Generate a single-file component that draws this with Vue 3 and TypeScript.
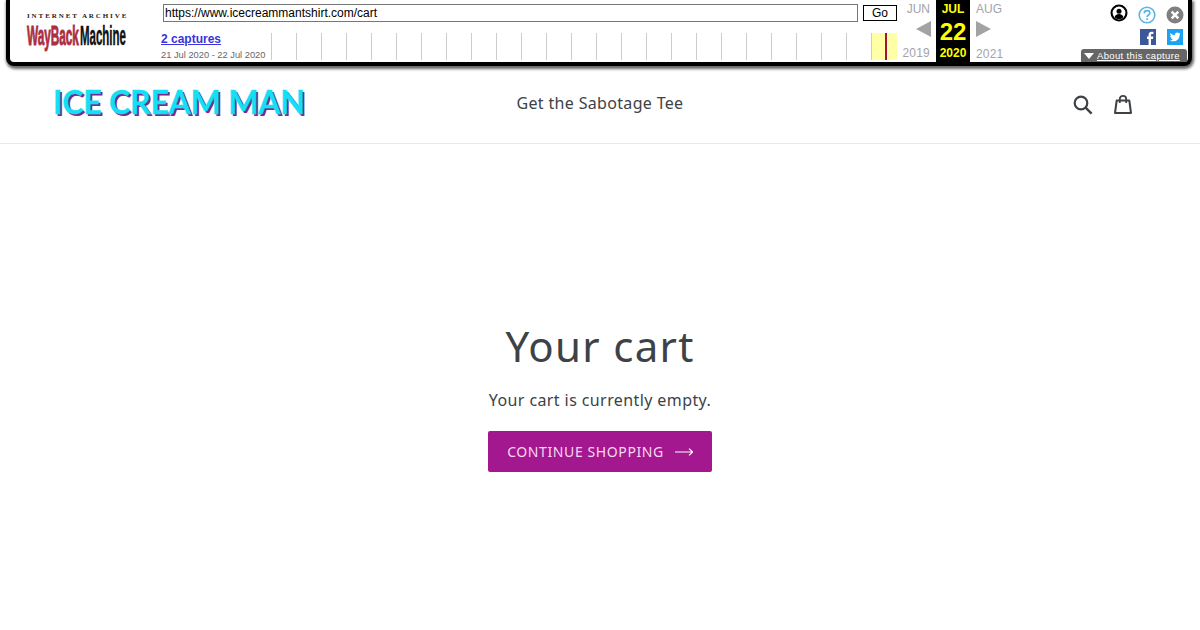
<script setup lang="ts">
const ticks: number[] = Array.from({ length: 24 }, (_, i) => i)
</script>

<template>
  <div class="page">
    <div class="wb">
      <div class="wb-logo">
        <div class="ia">INTERNET ARCHIVE</div>
        <div class="wm"><span class="way">WayBack</span><span class="mach">Machine</span></div>
      </div>
      <div class="wb-mid">
        <div class="url-row">
          <div class="url">https://www.icecreammantshirt.com/cart</div>
          <div class="go">Go</div>
        </div>
        <div class="cap-row">
          <div class="cap">
            <a class="cap-link">2 captures</a>
            <div class="cap-date">21 Jul 2020 - 22 Jul 2020</div>
          </div>
          <div class="spark">
            <div v-for="t in ticks" :key="t" class="tick"></div>
            <div class="tick now"><i></i></div>
          </div>
        </div>
      </div>
      <div class="cal side">
        <div class="mon r">JUN</div>
        <div class="arrow left"></div>
        <div class="yr r">2019</div>
      </div>
      <div class="cal cur">
        <div class="mon">JUL</div>
        <div class="day">22</div>
        <div class="yr">2020</div>
      </div>
      <div class="cal side next">
        <div class="mon l">AUG</div>
        <div class="arrow right"></div>
        <div class="yr l">2021</div>
      </div>
      <div class="wb-tools">
        <div class="tool-row">
          <svg width="18" height="18" viewBox="0 0 18 18">
            <circle cx="9" cy="9" r="8.5" fill="#000" />
            <circle cx="9" cy="9" r="6.4" fill="#fff" />
            <circle cx="9" cy="7.2" r="2.5" fill="#000" />
            <path d="M4.5 13.2c.8-2.4 2.5-3.3 4.5-3.3s3.700.9 4.500 3.300c-1.200 1.200-2.800 1.900-4.500 1.900s-3.300-.7-4.500-1.900z" fill="#000" />
          </svg>
          <svg class="help" width="18" height="18" viewBox="0 0 18 18">
            <circle cx="9" cy="9" r="7.800" fill="none" stroke="#5bb3e6" stroke-width="1.600" />
            <path d="M6.300 7.200c0-1.600 1.200-2.600 2.800-2.600s2.700 1 2.700 2.300c0 2.100-2.700 2-2.700 4" fill="none" stroke="#5bb3e6" stroke-width="1.700" />
            <rect x="8.200" y="12.300" width="1.800" height="1.800" fill="#5bb3e6" />
          </svg>
          <svg class="help" width="18" height="18" viewBox="0 0 18 18">
            <circle cx="9" cy="9" r="8.500" fill="#808080" />
            <path d="M5.700 5.700l6.600 6.600M12.300 5.700l-6.600 6.600" stroke="#fff" stroke-width="2.400" />
          </svg>
        </div>
        <div class="share-row">
          <svg width="16" height="16" viewBox="0 0 16 16">
            <rect width="16" height="16" fill="#3b5998" />
            <path d="M11 16V10h2l.3-2.400H11V6.200c0-.7.2-1.200 1.200-1.200h1.200V2.900c-.3 0-1-.1-1.800-.1-1.800 0-3 1.100-3 3.100v1.700H7V10h1.600v6z" fill="#fff" />
          </svg>
          <svg width="16" height="16" viewBox="0 0 16 16">
            <rect width="16" height="16" fill="#1da1f2" />
            <path d="M13.500 4.600c-.4.200-.8.300-1.300.4.500-.3.800-.7 1-1.200-.4.300-.9.400-1.400.5a2.200 2.200 0 0 0-3.800 2C6.200 6.200 4.600 5.300 3.500 4c-.6 1-.3 2.300.7 3-.4 0-.7-.1-1-.3 0 1.100.8 2 1.800 2.200-.3.100-.7.100-1 0 .3.900 1.100 1.500 2.100 1.500-1 .8-2.200 1.100-3.300 1 3.300 2.100 9.800.9 9.800-5.700.4-.3.700-.7.900-1.100z" fill="#fff" />
          </svg>
        </div>
        <div class="about"><span class="tri"></span><span class="about-t">About this capture</span></div>
      </div>
    </div>

    <header class="hdr">
      <div class="brand">ICE CREAM MAN</div>
      <nav class="nav">Get the Sabotage Tee</nav>
      <div class="hdr-icons">
        <svg width="20" height="20" viewBox="0 0 20 20">
          <circle cx="8" cy="8" r="6.300" fill="none" stroke="#3d4246" stroke-width="2.200" />
          <path d="M12.600 12.600l6 6" stroke="#3d4246" stroke-width="2.400" />
        </svg>
        <svg width="20" height="22" viewBox="0 0 20 22">
          <path d="M3.700 6.500h12.600l1.700 12.500H2z" fill="none" stroke="#3d4246" stroke-width="2" stroke-linejoin="round" />
          <path d="M6.800 9V5a3.200 3.200 0 0 1 6.400 0v4" fill="none" stroke="#3d4246" stroke-width="1.800" />
        </svg>
      </div>
    </header>

    <main class="main">
      <h1 class="title">Your cart</h1>
      <p class="empty">Your cart is currently empty.</p>
      <a class="btn">
        <span>CONTINUE SHOPPING</span>
        <svg width="18" height="8" viewBox="0 0 18 8">
          <path d="M0 4h17.500M14 .7L17.700 4 14 7.300" fill="none" stroke="#fff" stroke-width="1.100" />
        </svg>
      </a>
    </main>
  </div>
</template>

<style>
html, body { margin: 0; background: #fff; }
</style>

<style scoped>
.page {
  width: 1200px;
  height: 630px;
  overflow: hidden;
  background: #fff;
  font-family: "Noto Sans", sans-serif;
  color: #3d4246;
}
.wb {
  box-sizing: border-box;
  width: 1186px;
  height: 66px;
  margin-left: 6px;
  display: flex;
  background: #fff;
  border: 4px solid #000;
  border-top: 0;
  border-radius: 0 0 8px 8px;
  box-shadow: 1px 2px 3px 1px #666;
  font-family: "Liberation Sans", Arial, sans-serif;
}
.wb-logo {
  width: 151px;
  flex: none;
  box-sizing: border-box;
  padding: 12px 0 0 17px;
}
.ia {
  width: 100px;
  height: 8px;
  font: 700 7px/8px "Liberation Serif", serif;
  letter-spacing: 1.900px;
  color: #222;
  white-space: nowrap;
}
.wm {
  display: flex;
  width: 99px;
  height: 32px;
  font: 700 28px/32px "Liberation Sans", sans-serif;
  white-space: nowrap;
}
.way {
  display: block;
  width: 53px;
  flex: none;
  color: #ab2e43;
  -webkit-text-stroke: 1px #ab2e43;
  transform: scaleX(0.42);
  transform-origin: left center;
}
.mach {
  display: block;
  width: 46px;
  flex: none;
  color: #111;
  -webkit-text-stroke: .5px #111;
  transform: scaleX(0.41);
  transform-origin: left center;
}
.wb-mid {
  width: 736px;
  flex: none;
}
.url-row {
  display: flex;
  gap: 5px;
  padding: 4px 0 0 2px;
  height: 18px;
}
.url {
  box-sizing: border-box;
  width: 695px;
  height: 18px;
  border: 1px solid #767676;
  padding-left: 1px;
  font-size: 12px;
  line-height: 16px;
  color: #000;
}
.go {
  box-sizing: border-box;
  width: 34px;
  height: 16px;
  margin-top: 1px;
  border: 1px solid #000;
  font-size: 12px;
  line-height: 14px;
  text-align: center;
  color: #000;
}
.cap-row {
  display: flex;
  margin-top: 11px;
}
.cap {
  width: 110px;
  flex: none;
  margin-top: -1px;
}
.cap-link {
  display: block;
  font-size: 12px;
  font-weight: 700;
  line-height: 14px;
  color: #3a35d8;
  text-decoration: underline;
}
.cap-date {
  margin-top: 3px;
  font-size: 9.300px;
  line-height: 12px;
  color: #666;
  white-space: nowrap;
}
.spark {
  display: flex;
  height: 27px;
}
.tick {
  box-sizing: border-box;
  width: 25px;
  height: 27px;
  border-left: 1px solid #ccc;
}
.now {
  width: 26px;
  background: #ffffa5;
}
.now i {
  display: block;
  width: 2px;
  height: 27px;
  margin-left: 13px;
  background: #a5123f;
}
.cal {
  flex: none;
  display: flex;
  flex-direction: column;
  height: 62px;
  font-size: 12px;
}
.side {
  width: 39px;
  color: #a3a3ac;
}
.next { width: 40px; }
.cur {
  width: 34px;
  background: #000;
  color: #ff0;
  text-align: center;
  font-weight: 700;
}
.mon { height: 18px; line-height: 18px; }
.r { text-align: right; padding-right: 6px; }
.l { padding-left: 6px; }
.yr { margin-top: auto; height: 18px; line-height: 18px; letter-spacing: .2px; }
.cur .yr { margin-top: -2px; letter-spacing: 0; }
.next .yr { margin-bottom: -1px; }
.day {
  font-size: 24px;
  line-height: 28px;
}
.arrow {
  width: 0;
  height: 0;
  margin-top: 3px;
  border-top: 8px solid transparent;
  border-bottom: 8px solid transparent;
}
.left {
  align-self: flex-end;
  margin-right: 5px;
  border-right: 15px solid #a3a3a3;
}
.right {
  margin-left: 6px;
  border-left: 15px solid #a3a3a3;
}
.wb-tools {
  flex: 1;
  display: flex;
  flex-direction: column;
  align-items: flex-end;
  padding: 4px 4px 0 0;
}
.tool-row {
  display: flex;
  gap: 10px;
  height: 19px;
}
.help { margin-top: 2px; }
.share-row {
  display: flex;
  gap: 11px;
  margin-top: 6px;
  margin-right: 1px;
}
.about {
  display: flex;
  align-items: center;
  box-sizing: border-box;
  width: 106px;
  height: 13px;
  margin-top: 4px;
  margin-right: -3px;
  padding-left: 3px;
  background: #666;
  border-radius: 3px 3px 0 0;
  color: #fff;
  font-size: 9.500px;
  white-space: nowrap;
}
.tri {
  width: 0;
  height: 0;
  margin-right: 3px;
  border-left: 5px solid transparent;
  border-right: 5px solid transparent;
  border-top: 6px solid #fff;
}
.about-t { text-decoration: underline; letter-spacing: .35px; }

.hdr {
  box-sizing: border-box;
  height: 78px;
  display: grid;
  grid-template-columns: 1fr auto 1fr;
  align-items: center;
  padding: 0 67px 2px;
  border-bottom: 1px solid #e8e9eb;
}
.brand {
  margin: -3px 0 0 -14px;
  font: 700 32px/38px Lato, sans-serif;
  letter-spacing: -.2px;
  color: #14e0f5;
  -webkit-text-stroke: .4px #14e0f5;
  text-shadow: 2px 2px 0 #7b2a90;
  white-space: nowrap;
}
.nav {
  margin-top: -2px;
  font-size: 16px;
  letter-spacing: .33px;
  line-height: 20px;
}
.hdr-icons {
  display: flex;
  justify-content: flex-end;
  gap: 20px;
  align-items: center;
  padding-top: 3px;
}
.main {
  display: flex;
  flex-direction: column;
  align-items: center;
  padding-top: 173px;
}
.title {
  margin: 0;
  font-size: 42px;
  font-weight: 400;
  line-height: 58px;
  letter-spacing: 1.300px;
}
.empty {
  margin: 13px 0 0;
  font-size: 16px;
  line-height: 24px;
  letter-spacing: .4px;
}
.btn {
  box-sizing: border-box;
  width: 224px;
  height: 41px;
  margin-top: 19px;
  display: flex;
  align-items: center;
  justify-content: center;
  gap: 11px;
  background: #a3188f;
  border-radius: 2px;
  color: #fbd7f3;
  font-size: 14px;
  letter-spacing: .600px;
}
</style>
